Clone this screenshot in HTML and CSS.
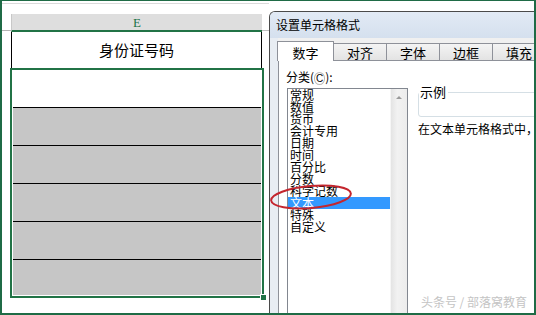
FILE: index.html
```html
<!DOCTYPE html>
<html>
<head>
<meta charset="utf-8">
<link rel="stylesheet" href="styles.css">
</head>
<body>
  <div class="screen">
    <div class="sheet">
      <div class="topstrip"></div>
      <div class="colrow">
        <div class="corner"></div>
        <div class="colhead">E</div>
        <div class="colrest"></div>
      </div>
      <div class="titlecell">身份证号码</div>
      <div class="selection">
        <div class="row first"></div>
        <div class="row"></div>
        <div class="row"></div>
        <div class="row"></div>
        <div class="row"></div>
        <div class="row last"></div>
        <div class="handle"></div>
      </div>
    </div>

    <div class="dialog">
      <div class="dlg-title">设置单元格格式</div>
      <div class="dlg-body">
        <div class="tabs">
          <div class="tab on">数字</div>
          <div class="tab">对齐</div>
          <div class="tab">字体</div>
          <div class="tab">边框</div>
          <div class="tab">填充</div>
        </div>
        <div class="panel">
          <div class="leftcol">
            <div class="label">分类(<u>C</u>):</div>
            <div class="listbox">
              <div class="items">
                <div>常规</div>
                <div>数值</div>
                <div>货币</div>
                <div>会计专用</div>
                <div>日期</div>
                <div>时间</div>
                <div>百分比</div>
                <div>分数</div>
                <div>科学记数</div>
                <div class="sel">文本</div>
                <div>特殊</div>
                <div>自定义</div>
              </div>
              <div class="scrollbar">
                <div class="sbtn"><span class="arrow up"></span></div>
                <div class="sbtn"><span class="arrow down"></span></div>
              </div>
            </div>
          </div>
          <div class="rightcol">
            <fieldset class="sample">
              <legend>示例</legend>
              <div class="sample-body"></div>
            </fieldset>
            <div class="desc">在文本单元格格式中，</div>
          </div>
        </div>
      </div>
    </div>

    <!-- red mark drawn over the list -->
    <svg class="circle" width="92" height="32" viewBox="0 0 92 32">
      <ellipse cx="41" cy="14" rx="40" ry="11" transform="rotate(-5 41 14)" fill="none" stroke="#c4262e" stroke-width="2"/>
    </svg>
    <div class="watermark">头条号 / 部落窝教育</div>
  </div>
</body>
</html>
```

FILE: styles.css
```css
* {
  box-sizing: border-box;
}

body {
  margin: 0;
  font-family: "Noto Sans CJK SC", sans-serif;
  color: #000;
}

/* whole picture, green frame */
.screen {
  position: relative;
  width: 536px;
  height: 315px;
  border: 2px solid #1f6b46;
  border-top-width: 1px;
  overflow: hidden;
  display: flex;
  background: #fff;
}

/* left: the worksheet */
.sheet {
  flex: none;
  width: 267px;
}

.topstrip {
  margin-top: 2px;
  height: 11px;
  border-top: 1px solid #dadada;
}

.colrow {
  display: flex;
  height: 18px;
}

.corner {
  width: 9px;
  height: 17px;
  border-bottom: 1px solid #b4b4b4;
}

.colhead {
  width: 251px;
  height: 18px;
  background: #dedede;
  border-left: 1px solid #c8c8c8;
  border-bottom: 2px solid #217346;
  color: #217346;
  font-family: "Liberation Serif", serif;
  font-size: 13px;
  line-height: 17px;
  text-align: center;
}

.colrest {
  flex: 1;
  height: 17px;
  border-bottom: 1px solid #c0c0c0;
}

.titlecell {
  margin-left: 9px;
  width: 251px;
  height: 36px;
  border-left: 1px solid #000;
  border-right: 1px solid #000;
  font-size: 15px;
  line-height: 36px;
  text-align: center;
}

.selection {
  position: relative;
  margin-left: 8px;
  width: 254px;
  height: 230px;
  border: 2px solid #217346;
  display: flex;
  flex-direction: column;
  box-shadow: inset 0 0 0 1px #fff;
}

.row {
  height: 38px;
  background: #c6c6c6;
  border-bottom: 1px solid #000;
  margin: 0 1px;
}

.row.first {
  background: #fff;
  margin-top: 1px;
  height: 37px;
}

.row.last {
  flex: 1;
  border-bottom: none;
  margin-bottom: 1px;
}

.handle {
  position: absolute;
  right: -5px;
  bottom: -5px;
  width: 7px;
  height: 7px;
  background: #217346;
  border: 1px solid #fff;
}

/* right: format cells dialog */
.dialog {
  flex: 1;
  margin-top: 10px;
  border-left: 1px solid #4a4a4a;
  border-top: 1px solid #4a4a4a;
  border-top-left-radius: 6px;
  background: #e8edf3;
  display: flex;
  flex-direction: column;
}

.dlg-title {
  height: 26px;
  padding-left: 6px;
  font-size: 12px;
  line-height: 26px;
  white-space: nowrap;
  border-top-left-radius: 5px;
  background: linear-gradient(#e2eaf5, #d5e0ee);
}

.dlg-body {
  flex: 1;
  margin-left: 8px;
  display: flex;
  flex-direction: column;
  background: #f0f0f0;
}

.tabs {
  display: flex;
  align-items: flex-end;
  height: 22px;
}

.tab {
  flex: none;
  width: 54px;
  height: 17px;
  margin-left: -1px;
  padding-top: 1px;
  border: 1px solid #8e9199;
  border-bottom: none;
  background: linear-gradient(#f4f4f4, #e3e3e3);
  font-size: 13px;
  line-height: 15px;
  text-align: center;
}

.tab.on {
  position: relative;
  z-index: 1;
  width: 57px;
  height: 20px;
  padding-top: 3px;
  margin-bottom: -1px;
  background: #fff;
}

.panel {
  flex: 1;
  display: flex;
  gap: 10px;
  padding: 9px 0 0 7px;
  background: #fff;
  border-top: 1px solid #8e9199;
  border-left: 1px solid #8e9199;
}

.leftcol {
  flex: none;
  width: 122px;
}

.label {
  font-size: 12px;
  line-height: 14px;
  margin-bottom: 2px;
  white-space: nowrap;
}

.label u {
  text-decoration: none;
  font-family: "Liberation Sans", sans-serif;
  border: 1px solid #bbb;
  border-radius: 50%;
  padding: 0 1px;
  font-size: 10px;
}

.listbox {
  margin-left: 1px;
  width: 121px;
  height: 236px;
  border: 1px solid #828790;
  display: flex;
}

.items {
  width: 102px;
  font-size: 12px;
  line-height: 12px;
}

.items div {
  padding-left: 2px;
  height: 12px;
  white-space: nowrap;
}

.items .sel {
  background: #3399ff;
  color: #fff;
}

.scrollbar {
  flex: 1;
  display: flex;
  flex-direction: column;
  justify-content: space-between;
  background: linear-gradient(to right, #e4e4e4, #f2f2f2 40%, #ececec);
  border-left: 1px solid #f6f6f6;
}

.sbtn {
  height: 17px;
  display: flex;
  align-items: center;
  justify-content: center;
}

.arrow {
  width: 0;
  height: 0;
  border-left: 3px solid transparent;
  border-right: 3px solid transparent;
}

.arrow.up {
  border-bottom: 3px solid #9a9a9a;
}

.arrow.down {
  border-top: 3px solid #9a9a9a;
}

.rightcol {
  flex: none;
  width: 200px;
}

.sample {
  margin: 15px 0 0 0;
  padding: 0;
  width: 200px;
  border: 1px solid #d5dfe5;
  border-radius: 3px;
}

.sample legend {
  padding: 0 2px 0 1px;
  margin-left: 0;
  font-size: 13px;
  line-height: 14px;
}

.sample-body {
  height: 17px;
}

.desc {
  margin-top: 5px;
  font-size: 12px;
  line-height: 14px;
  white-space: nowrap;
}

/* overlays */
.circle {
  position: absolute;
  left: 268px;
  top: 182px;
}

.watermark {
  position: absolute;
  right: 7px;
  bottom: 4px;
  font-size: 12px;
  line-height: 14px;
  color: #c4c4c4;
  white-space: nowrap;
}
```
